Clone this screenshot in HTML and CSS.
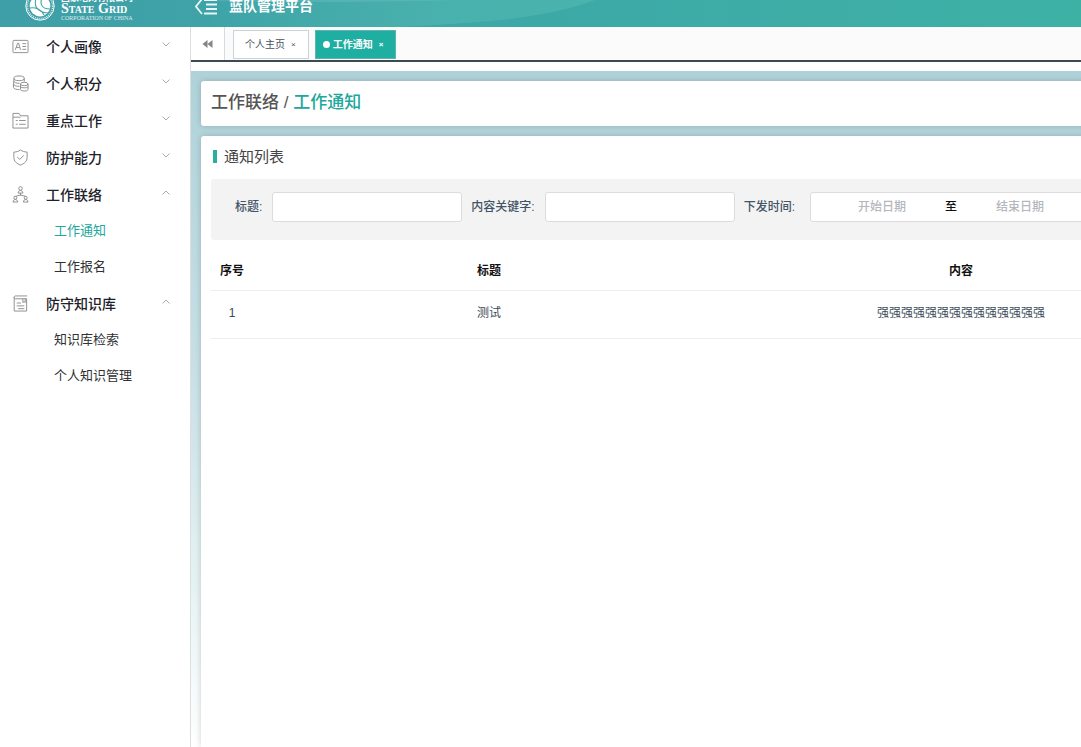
FILE: index.html
```html
<!DOCTYPE html>
<html lang="zh-CN">
<head>
<meta charset="utf-8">
<meta name="viewport" content="width=device-width, initial-scale=1">
<title>蓝队管理平台</title>
<link rel="stylesheet" href="styles.css">
</head>
<body>
<header class="header">
  <svg class="header-wave" viewBox="0 0 600 27" preserveAspectRatio="none" aria-hidden="true">
    <defs><linearGradient id="wave" x1="0" x2="1"><stop offset="0" stop-color="#6fd0c0" stop-opacity="0"/><stop offset=".6" stop-color="#6fd0c0" stop-opacity=".24"/><stop offset="1" stop-color="#6fd0c0" stop-opacity=".24"/></linearGradient></defs>
    <path d="M0 0H250Q180 2 100 2L0 1Z" fill="#fff" opacity=".1"/>
    <path d="M0 0H390C350 15 300 22 195 27H0Z" fill="url(#wave)"/>
  </svg>
  <div class="brand">
    <svg class="brand-mark" viewBox="0 0 32 32" fill="none" stroke="#fff" aria-hidden="true">
      <circle cx="16" cy="16" r="14.2" stroke-width="1"/>
      <circle cx="16" cy="16" r="12.6" stroke-width="1.6" stroke-dasharray="1 1" opacity=".8"/>
      <circle cx="16" cy="16" r="10.4" fill="#fff" stroke="none"/>
      <path d="M13 6C9 15 12 22 24 23M19 6C15 13 17 19 26 19M6 18C11 17 17 19 20 25" stroke="#3fa5a8" stroke-width="1.1"/>
    </svg>
    <div class="brand-text">
      <span class="brand-cn">国家电网有限公司</span>
      <span class="brand-en">State Grid</span>
      <span class="brand-sub">CORPORATION OF CHINA</span>
    </div>
  </div>
  <button class="collapse" type="button" aria-label="收起菜单">
    <svg viewBox="0 0 22 18" fill="none" stroke="#e8f6f5" stroke-width="1.8"><path d="M7 2L1 9.500L7 17M9 3H22M11 7.500H22M11 12H22M9 16.500H22"/></svg>
  </button>
  <h1 class="title">蓝队管理平台</h1>
</header>
<div class="layout">
  <nav class="sidebar">
    <ul class="menu">
      <li><button class="menu-item" type="button">
        <svg class="icon" viewBox="0 0 18 18"><rect x="1" y="2.500" width="16" height="13" rx="1"/><path d="M3.500 12.500L6 5.500H7L9 12.500M4.500 10H8M11 6H15M11 9H15M11 12H15"/></svg>
        <span>个人画像</span><svg class="chevron" viewBox="0 0 8 5"><path d="M.5 .5L4 4L7.500 .5"/></svg></button></li>
      <li><button class="menu-item" type="button">
        <svg class="icon" viewBox="0 0 18 18"><ellipse cx="7.500" cy="3.500" rx="5.500" ry="2.500"/><path d="M2 3.500V6.500C2 8 5 9 8 8.800M13 3.500V7M2 6.500L1.500 9.500C2 11.500 5 12 8 12M1.500 9.500V13C2 15 5 15.500 8 15.500"/><ellipse cx="13" cy="9.500" rx="4" ry="1.800"/><path d="M9 9.500V15.500C10 17.500 16 17.500 17 15.500V9.500M9 12.500C10 14 16 14 17 12.500"/></svg>
        <span>个人积分</span><svg class="chevron" viewBox="0 0 8 5"><path d="M.5 .5L4 4L7.500 .5"/></svg></button></li>
      <li><button class="menu-item" type="button">
        <svg class="icon" viewBox="0 0 18 18"><path d="M1 17V1.500H7.500L9 4H17V17ZM1 5.500H9M4 9H6M7.500 9H14.500M4 13H6M7.500 13H14.500"/></svg>
        <span>重点工作</span><svg class="chevron" viewBox="0 0 8 5"><path d="M.5 .5L4 4L7.500 .5"/></svg></button></li>
      <li><button class="menu-item" type="button">
        <svg class="icon" viewBox="0 0 18 18"><path d="M9 1C11 2.600 13.500 3.200 16 3.200V9C16 13 13 15.500 9 17C5 15.500 2 13 2 9V3.200C4.500 3.200 7 2.600 9 1ZM5.500 8.500L8.200 11L12.500 6.800"/></svg>
        <span>防护能力</span><svg class="chevron" viewBox="0 0 8 5"><path d="M.5 .5L4 4L7.500 .5"/></svg></button></li>
      <li><button class="menu-item" type="button" aria-expanded="true">
        <svg class="icon" viewBox="0 0 18 18"><circle cx="9" cy="2.600" r="1.900"/><path d="M6.500 7.500C6.500 3.800 11.500 3.800 11.500 7.500ZM9 7.500V10M3.500 11L9 9.500L14.500 11"/><circle cx="3.500" cy="12.500" r="1.600"/><path d="M1 17C1 13.500 6 13.500 6 17Z"/><circle cx="14.500" cy="12.500" r="1.600"/><path d="M12 17C12 13.500 17 13.500 17 17Z"/></svg>
        <span>工作联络</span><svg class="chevron" viewBox="0 0 8 5"><path d="M.5 4.500L4 1L7.500 4.500"/></svg></button>
        <ul class="submenu">
          <li><a class="sub-item active" href="#notice">工作通知</a></li>
          <li><a class="sub-item" href="#signup">工作报名</a></li>
        </ul></li>
      <li><button class="menu-item" type="button" aria-expanded="true">
        <svg class="icon" viewBox="0 0 18 18"><path d="M16 1H3.500C2 1 2 4 3.500 4H15.500V17H2.300V2M11.500 4V8L12.800 7L14 8V4M5 8.500H9.500M5 11.500H13M6.500 14.500H13"/></svg>
        <span>防守知识库</span><svg class="chevron" viewBox="0 0 8 5"><path d="M.5 4.500L4 1L7.500 4.500"/></svg></button>
        <ul class="submenu">
          <li><a class="sub-item" href="#search">知识库检索</a></li>
          <li><a class="sub-item" href="#manage">个人知识管理</a></li>
        </ul></li>
    </ul>
  </nav>
  <main class="main">
    <div class="tabs">
      <button class="tabs-back" type="button" aria-label="向左滚动"><svg viewBox="0 0 10 8" fill="#858585"><path d="M5 0V8L0 4ZM10 0V8L5 4Z"/></svg></button>
      <div class="tabs-list">
        <button class="tab" type="button">个人主页<span class="tab-close">×</span></button>
        <button class="tab tab-active" type="button"><i class="dot"></i>工作通知<span class="tab-close">×</span></button>
      </div>
    </div>
    <div class="content">
      <section class="card crumb">工作联络 / <span class="crumb-current">工作通知</span></section>
      <section class="card panel">
        <h2 class="panel-title">通知列表</h2>
        <form class="filter">
          <div class="field"><label for="f-title">标题:</label><input class="box" id="f-title" type="text"></div>
          <div class="field"><label for="f-key">内容关键字:</label><input class="box" id="f-key" type="text"></div>
          <div class="field field-date"><label for="f-start">下发时间:</label>
            <div class="box range"><input id="f-start" type="text" placeholder="开始日期"><span>至</span><input type="text" placeholder="结束日期" aria-label="结束日期"></div></div>
        </form>
        <table class="table">
          <colgroup><col class="col-no"><col><col><col></colgroup>
          <thead><tr><th>序号</th><th>标题</th><th>内容</th><th></th></tr></thead>
          <tbody><tr><td>1</td><td>测试</td><td>强强强强强强强强强强强强强强</td><td></td></tr></tbody>
        </table>
      </section>
    </div>
  </main>
</div>
</body>
</html>
```
FILE: styles.css
```css
* { box-sizing: border-box; }
body {
  margin: 0;
  height: 100vh;
  display: flex;
  flex-direction: column;
  overflow: hidden;
  background: #fff;
  color: #2c3e50;
  font: 12px/18px "Liberation Sans", "Noto Sans CJK SC", sans-serif;
}
button, input { font: inherit; color: inherit; }
button { border: 0; padding: 0; background: none; cursor: pointer; }
ul { list-style: none; margin: 0; padding: 0; }
h1, h2 { margin: 0; }
a { color: inherit; text-decoration: none; }

.header {
  position: relative;
  flex: none;
  height: 27px;
  display: flex;
  align-items: flex-end;
  overflow: hidden;
  color: #fff;
  background: linear-gradient(90deg, #3f9fa8, #3da9a7 50%, #3eb1a5);
}
.header-wave { position: absolute; left: 205px; top: 0; width: 600px; height: 27px; }
.brand { position: relative; display: flex; align-items: flex-end; gap: 5px; width: 195px; padding: 0 0 5px 24px; }
.brand-mark { width: 32px; height: 32px; flex: none; }
.brand-text { display: flex; flex-direction: column; padding-bottom: 2px; white-space: nowrap; }
.brand-cn { font-size: 9px; line-height: 9px; font-weight: 700; }
.brand-en { font: small-caps 700 14px/12px "Liberation Serif", serif; }
.brand-sub { font: 6px/6px "Liberation Serif", serif; margin-bottom: -1px; opacity: .8; }
.collapse { position: relative; width: 22px; height: 18px; margin-bottom: 12px; }
.collapse svg { display: block; width: 22px; height: 18px; }
.title { position: relative; margin: 0 0 11px 12px; font-size: 14px; line-height: 20px; font-weight: 700; }

.layout { flex: 1; min-height: 0; display: flex; }
.sidebar { flex: none; width: 191px; border-right: 1px solid #dcdfe2; padding-top: 1px; }
.menu-item {
  width: 100%;
  height: 37px;
  display: flex;
  align-items: center;
  padding: 0 20px 0 12px;
  font-size: 14px;
  font-weight: 500;
  color: #1d2129;
}
.icon { width: 17px; height: 17px; margin-right: 17px; fill: none; stroke: #8c8c8c; stroke-width: 1; }
.chevron { width: 8px; height: 5px; margin: 0 0 4px auto; fill: none; stroke: #aaa; stroke-width: 1; }
.sub-item { display: block; padding-left: 54px; font-size: 13px; line-height: 36px; color: #303133; }
.sub-item.active { color: #21a79b; }

.main { flex: 1; min-width: 0; display: flex; flex-direction: column; overflow: hidden; }
.tabs { flex: none; height: 35px; display: flex; border-bottom: 2px solid #3b4a54; background: #fbfbfb; }
.tabs-back { width: 34px; background: #fff; border-right: 1px solid #d8dcdf; }
.tabs-back svg { width: 11px; height: 8px; }
.tabs-list { display: flex; align-items: center; gap: 6px; padding: 2px 8px 0; }
.tab {
  height: 29px;
  display: flex;
  align-items: center;
  padding: 0 12px 0 11px;
  border: 1px solid #cbd3da;
  background: #fff;
  color: #495060;
  font-size: 10px;
}
.tab-close { margin-left: 6px; font-size: 8px; }
.tab-active { padding: 0 12px 0 7px; border-color: #5fb4ac; background: #1fafa2; color: #fff; font-weight: 700; }
.dot { width: 7px; height: 7px; margin-right: 3px; border-radius: 50%; background: #fff; }

.content {
  flex: 1;
  min-width: 1498px;
  margin-top: 9px;
  padding: 10px 10px 0;
  display: flex;
  flex-direction: column;
  gap: 10px;
  background: linear-gradient(#afd2d9, #c8e0e6 45%, #e5f2f2 75%, #fff);
}
.card { background: #fff; border-radius: 3px; box-shadow: 0 0 6px rgba(0, 0, 0, .18); padding: 0 10px; }
.crumb { flex: none; padding-bottom: 2px; font-size: 17px; line-height: 43px; color: #555; font-weight: 500; }
.crumb-current { color: #21a79b; }
.panel { flex: 1; border-radius: 3px 3px 0 0; }
.panel-title { display: flex; align-items: center; height: 43px; padding: 0 0 2px 2px; font-size: 15px; font-weight: 400; color: #444; }
.panel-title::before { content: ""; width: 4px; height: 13px; margin-right: 7px; background: #2aae9f; }
.filter { height: 61px; display: flex; gap: 9px; padding: 13px 24px 0; background: #f3f3f3; border-radius: 3px; }
.field { display: flex; align-items: center; height: 30px; gap: 10px; color: #425466; font-weight: 500; }
.field-date { gap: 15px; }
.box { width: 190px; height: 30px; border: 1px solid #dcdcdf; border-radius: 3px; background: #fff; }
.range { width: 274px; padding-left: 8px; display: flex; align-items: center; color: #111; }
.range input { flex: 1; min-width: 0; border: 0; padding: 0; background: none; text-align: center; outline: 0; }
.range input::placeholder { color: #b4b8be; }
.table { width: 100%; margin-top: 10px; table-layout: fixed; border-collapse: collapse; text-align: center; }
.col-no { width: 42px; }
.table th { height: 40px; padding: 2px 0 0; border-bottom: 1px solid #e9eeee; color: #111; font-weight: 700; }
.table td { height: 48px; padding: 0 0 2px; border-bottom: 1px solid #e9eeee; color: #3b4a58; }
```
